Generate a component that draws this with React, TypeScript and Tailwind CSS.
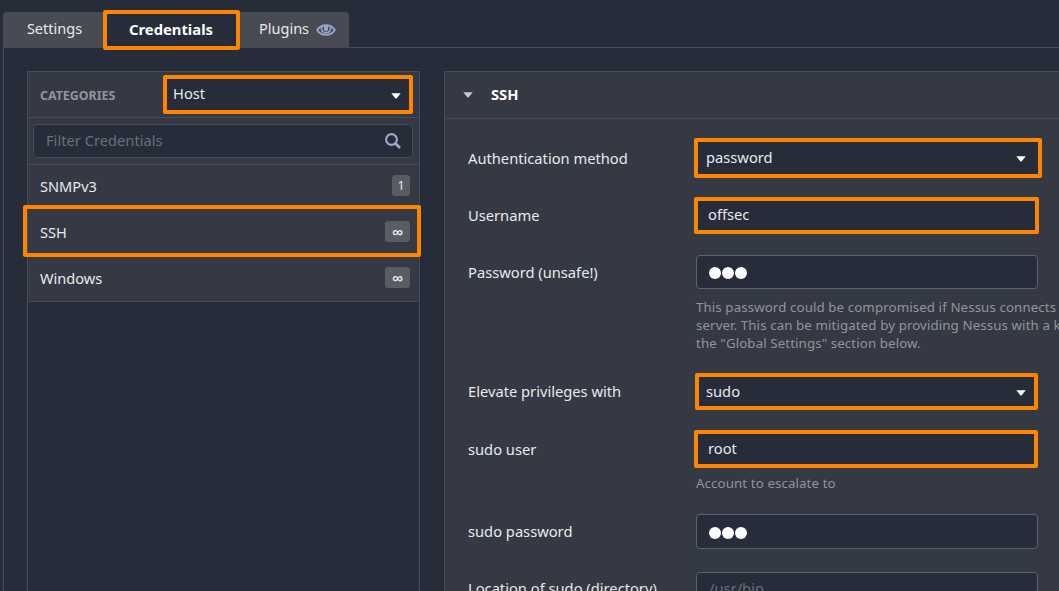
import type { ReactNode } from 'react';

function Caret({ className }: { className: string }) {
  return (
    <svg viewBox="0 0 10 6" className={`h-[6px] w-[10px] shrink-0 ${className}`}>
      <path d="M0.3 0.3H9.7L5.7 5.2Q5 5.9 4.3 5.2Z" fill="currentColor" />
    </svg>
  );
}

function EyeIcon() {
  return (
    <svg viewBox="0 0 20 12" className="h-[12px] w-[20px]" fill="none" stroke="#98a3cb">
      <path d="M1.2 6C3.2 2.8 6.2 1.2 10 1.2S16.8 2.8 18.8 6C16.8 9.3 13.8 10.8 10 10.8S3.2 9.3 1.2 6Z" strokeWidth="1.9" />
      <path d="M6 2.4C4.7 5.6 6.2 8.7 10 8.7S15.3 5.6 14 2.4" strokeWidth="1.6" />
      <path d="M8 2h4v3.2a2 2 0 0 1-4 0Z" fill="#98a3cb" stroke="none" />
    </svg>
  );
}

function SearchIcon() {
  return (
    <svg viewBox="0 0 16 16" className="h-[16px] w-[16px]" fill="none" stroke="#9ba7cf">
      <circle cx="6.5" cy="6.5" r="5.4" strokeWidth="2.1" />
      <path d="M10.5 10.5L15 15" strokeWidth="2.7" />
    </svg>
  );
}

function Category({ name, count, height, marked }: { name: string; count: string; height: string; marked?: boolean }) {
  return (
    <div className={`relative flex items-start justify-between pr-[9px] pl-[12px] ${height}`}>
      <span className="text-[14.6px] leading-[22px]">{name}</span>
      <span
        className={`flex h-[21px] items-center justify-center rounded-[3px] bg-[#595c63] ${count === '1' ? 'w-[18px] pt-px text-[12.5px]' : 'w-[25px] text-[15px] font-semibold'}`}
      >
        {count}
      </span>
      {marked && <div className="absolute -top-[5px] -right-[2px] -left-[5px] h-[52px] rounded-[2px] border-4 border-[#ff8400]" />}
    </div>
  );
}

function Row({ label, height, children }: { label: string; height: string; children: ReactNode }) {
  return (
    <div className={`flex shrink-0 items-start ${height}`}>
      <div className="flex h-[57px] w-[226px] shrink-0 items-center whitespace-nowrap">{label}</div>
      {children}
    </div>
  );
}

function Dots() {
  return (
    <svg viewBox="0 0 38 12" className="h-[12px] w-[38px]" fill="#fff">
      <circle cx="6" cy="6" r="6" />
      <circle cx="19" cy="6" r="6" />
      <circle cx="32" cy="6" r="6" />
    </svg>
  );
}

export default function App() {
  return (
    <div className="flex h-[591px] w-[1059px] flex-col overflow-hidden bg-[#262c39] pl-[3px] font-['Noto_Sans',sans-serif] text-[14.7px] text-[#e8e9eb]">
      <div className="flex h-[47px] shrink-0 items-end">
        <div className="flex h-[35px] w-[100px] items-center justify-center rounded-tl-[3px] bg-[#484b54] pb-px pl-[3px] text-[14.5px]">
          Settings
        </div>
        <div className="relative z-10 -mb-[3px] flex h-[40px] w-[137px] items-center justify-center rounded-[2px] border-4 border-[#ff8400] bg-[#262c39] pr-px pb-px text-[14.8px] font-bold text-white">
          Credentials
        </div>
        <div className="flex h-[35px] w-[109px] items-center rounded-tr-[3px] bg-[#484b54] pb-px pl-[19px] text-[14.5px]">
          Plugins
          <span className="mt-[2px] ml-[7px]"><EyeIcon /></span>
        </div>
      </div>

      <div className="flex flex-1 gap-6 border-t border-l border-[#484b54] pt-[23px] pl-[23px]">
        <aside className="flex w-[393px] shrink-0 flex-col border border-b-0 border-[#484b54]">
          <div className="flex h-[46px] shrink-0 items-center justify-between border-b border-[#484b54] bg-[#343944] pr-[6px] pl-[12px]">
            <span className="mt-[3px] text-[12.4px] font-bold text-[#92949a]">CATEGORIES</span>
            <div className="flex h-[39px] w-[250px] items-center justify-between rounded-[2px] border-4 border-[#ff8400] bg-[#262c39] pr-[8px] pb-px pl-[6px]">
              <span className="mb-[2px]">Host</span>
              <Caret className="mt-[4px] text-white" />
            </div>
          </div>
          <div className="flex h-[47px] shrink-0 items-center border-b border-[#484b54] bg-[#343944] pr-[6px] pl-[5px]">
            <div className="flex h-[34px] flex-1 items-center justify-between rounded-[4px] border border-[#484b54] bg-[#262c39] pr-[11px] pl-3 text-[#6b6f78]">
              <span className="mb-[2px]">Filter Credentials</span>
              <SearchIcon />
            </div>
          </div>
          <div className="shrink-0 border-b border-[#484b54] bg-[#343944]">
            <Category name="SNMPv3" count="1" height="h-[45px] pt-[10px]" />
            <Category name="SSH" count="∞" height="h-[46px] pt-[11px]" marked />
            <Category name="Windows" count="∞" height="h-[45px] pt-[11px]" />
          </div>
        </aside>

        <main className="flex h-[520px] w-[615px] shrink-0 flex-col border-t border-l border-[#484b54] bg-[#343944]">
          <div className="flex h-[47px] shrink-0 items-center border-b border-[#484b54] pl-[18px]">
            <Caret className="text-[#c8c9cb]" />
            <span className="mb-[2px] ml-[18px] text-[14.7px] font-bold text-white">SSH</span>
          </div>
          <div className="flex flex-col pt-[11px] pl-[23px]">
            <Row label="Authentication method" height="h-[57px]">
              <div className="mt-[8px] flex h-[40px] w-[348px] items-center justify-between rounded-[2px] border-4 border-[#ff8400] bg-[#262c39] pr-[12px] pl-[8px]">
                <span className="mb-px">password</span>
                <Caret className="mt-[2px] text-white" />
              </div>
            </Row>
            <Row label="Username" height="h-[57px]">
              <div className="mt-[10px] flex h-[37px] w-[345px] items-center rounded-[2px] border-4 border-[#ff8400] bg-[#262c39] pb-[2px] pl-[10px]">
                offsec
              </div>
            </Row>
            <Row label="Password (unsafe!)" height="h-[119px]">
              <div className="pt-[11px] pl-[2px]">
                <div className="flex h-[34px] w-[342px] items-center rounded-[4px] border border-[#596279] bg-[#262c39] pt-[2px] pl-3">
                  <Dots />
                </div>
                <div className="mt-[9px] text-[13.3px] leading-[18px] tracking-[0.1px] whitespace-nowrap text-[#92949a]">
                  <p>This password could be compromised if Nessus connects</p>
                  <p>server. This can be mitigated by providing Nessus with a k</p>
                  <p>the "Global Settings" section below.</p>
                </div>
              </div>
            </Row>
            <Row label="Elevate privileges with" height="h-[58px]">
              <div className="mt-[10px] ml-px flex h-[37px] w-[343px] items-center justify-between rounded-[2px] border-4 border-[#ff8400] bg-[#262c39] pr-[8px] pl-[7px]">
                sudo
                <Caret className="mt-[2px] text-white" />
              </div>
            </Row>
            <Row label="sudo user" height="h-[82px]">
              <div>
                <div className="mt-[9px] flex h-[38px] w-[344px] items-center rounded-[2px] border-4 border-[#ff8400] bg-[#262c39] pb-px pl-[10px]">
                  root
                </div>
                <p className="mt-[6px] ml-[2px] text-[13.3px] leading-[18px] tracking-[0.1px] text-[#92949a]">Account to escalate to</p>
              </div>
            </Row>
            <Row label="sudo password" height="h-[57px]">
              <div className="mt-[11px] ml-[2px] flex h-[35px] w-[342px] items-center rounded-[4px] border border-[#596279] bg-[#262c39] pt-[3px] pl-3">
                <Dots />
              </div>
            </Row>
            <Row label="Location of sudo (directory)" height="h-[57px]">
              <div className="mt-[12px] ml-[2px] flex h-[34px] w-[342px] items-center rounded-[4px] border border-[#596279] bg-[#262c39] pb-px pl-3 text-[#6b6f78]">
                /usr/bin
              </div>
            </Row>
          </div>
        </main>
      </div>
    </div>
  );
}
